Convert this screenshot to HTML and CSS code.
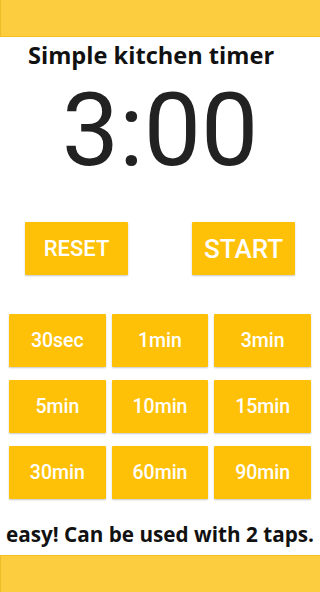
FILE: index.html
```html
<!DOCTYPE html>
<html>
<head>
<meta charset="utf-8">
<link rel="stylesheet" href="styles.css">
</head>
<body>
<div class="app">
  <header class="topbar"></header>
  <h1 class="title">Simple kitchen timer</h1>
  <div class="time">3:00</div>
  <div class="controls">
    <button class="btn ctl reset">RESET</button>
    <button class="btn ctl start">START</button>
  </div>
  <div class="presets">
    <button class="btn preset">30sec</button>
    <button class="btn preset">1min</button>
    <button class="btn preset">3min</button>
    <button class="btn preset">5min</button>
    <button class="btn preset">10min</button>
    <button class="btn preset">15min</button>
    <button class="btn preset">30min</button>
    <button class="btn preset">60min</button>
    <button class="btn preset">90min</button>
  </div>
  <p class="note">easy! Can be used with 2 taps.</p>
  <footer class="bottombar"></footer>
</div>
</body>
</html>
```

FILE: styles.css
```css
html, body {
  margin: 0;
  padding: 0;
  background: #ffffff;
}
.app {
  width: 320px;
  height: 592px;
  display: flex;
  flex-direction: column;
  overflow: hidden;
}
.topbar {
  height: 36px;
  flex: none;
  background: #fccd3e;
  border-bottom: 1px solid #f4c01c;
  border-left: 1px solid #efbd26;
}
.title {
  margin: 2px 0 0 0;
  padding-left: 28px;
  font-family: "Open Sans", "Noto Sans", sans-serif;
  font-weight: 700;
  font-size: 23.6px;
  line-height: 32px;
  color: #111111;
}
.time {
  margin-top: 4px;
  text-align: center;
  font-family: Roboto, sans-serif;
  font-weight: 400;
  font-size: 102px;
  line-height: 110px;
  color: #222222;
}
.controls {
  margin-top: 37px;
  padding: 0 25px;
  display: flex;
  justify-content: space-between;
}
.btn {
  border: none;
  margin: 0;
  padding: 0;
  background: #ffc107;
  color: #ffffff;
  font-family: Roboto, sans-serif;
  font-weight: 500;
  border-radius: 1px;
  box-shadow: 0 1px 2px rgba(0, 0, 0, 0.22);
  display: flex;
  align-items: center;
  justify-content: center;
}
.ctl {
  width: 103px;
  height: 53px;
}
.reset {
  font-size: 22px;
}
.start {
  font-size: 26px;
}
.presets {
  margin-top: 39px;
  padding: 0 9px;
  display: grid;
  grid-template-columns: repeat(3, 1fr);
  grid-auto-rows: 53px;
  gap: 13px 6px;
}
.preset {
  font-size: 19.5px;
}
.note {
  margin: 21px 0 0 0;
  text-align: center;
  font-family: "Open Sans", "Noto Sans", sans-serif;
  font-weight: 700;
  font-size: 20.7px;
  line-height: 28px;
  color: #111111;
  white-space: nowrap;
}
.bottombar {
  margin-top: auto;
  height: 36px;
  flex: none;
  background: #fccd3e;
  border-top: 1px solid #f4c01c;
  border-left: 1px solid #efbd26;
}
```
